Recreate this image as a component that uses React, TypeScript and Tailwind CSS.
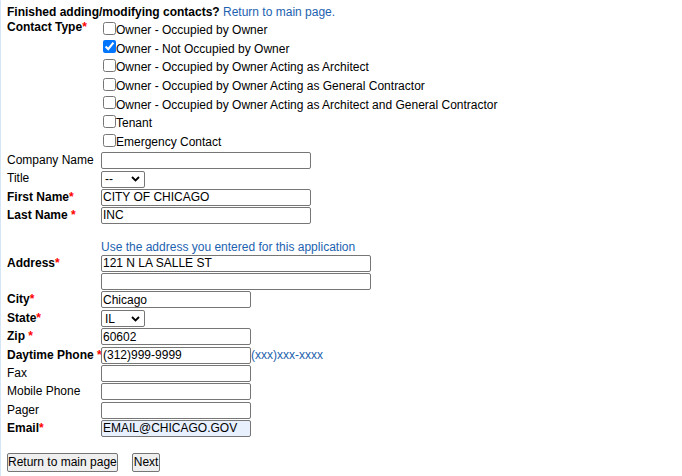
import React from "react";

const contactTypes = [
  { label: "Owner - Occupied by Owner", checked: false },
  { label: "Owner - Not Occupied by Owner", checked: true },
  { label: "Owner - Occupied by Owner Acting as Architect", checked: false },
  { label: "Owner - Occupied by Owner Acting as General Contractor", checked: false },
  {
    label: "Owner - Occupied by Owner Acting as Architect and General Contractor",
    checked: false,
  },
  { label: "Tenant", checked: false },
  { label: "Emergency Contact", checked: false },
];

const Star = ({ space }: { space?: boolean }) => (
  <span className="text-[#ff0000]">{space ? " *" : "*"}</span>
);

const Row = ({
  label,
  bold,
  req,
  reqSpace,
  children,
}: {
  label?: string;
  bold?: boolean;
  req?: boolean;
  reqSpace?: boolean;
  children?: React.ReactNode;
}) => {
  return (
    <div className="flex h-[18.35px]">
      <div
        className={
          bold
            ? "w-[94px] shrink-0 pt-[1px] leading-[14px] font-bold whitespace-nowrap"
            : "w-[94px] shrink-0 pt-[1px] leading-[14px] whitespace-nowrap"
        }
      >
        {label}
        {req && <Star space={reqSpace} />}
      </div>
      <div className="flex items-start">{children}</div>
    </div>
  );
};

const TextBox = ({
  value = "",
  width,
  filled,
}: {
  value?: string;
  width: string;
  filled?: boolean;
}) => {
  return (
    <input
      type="text"
      readOnly
      defaultValue={value}
      className={
        (filled ? "bg-[#e8f0fe] " : "bg-white ") +
        width +
        " h-[17px] border border-[#767676] rounded-[2px] px-[1px] py-0 text-[12px] leading-[14px] text-black outline-none"
      }
    />
  );
};

const SelectBox = ({ value }: { value: string }) => {
  return (
    <div className="relative w-[44px] h-[17px]">
      <select
        defaultValue={value}
        className="appearance-none w-full h-full border border-[#767676] rounded-[2px] bg-white pl-[3px] py-0 text-[12px] leading-[14px] text-black outline-none"
      >
        <option>{value}</option>
      </select>
      <svg
        className="pointer-events-none absolute right-[5px] top-[6px]"
        width="9"
        height="6"
        viewBox="0 0 9 6"
      >
        <polyline
          points="1,1 4.5,4.5 8,1"
          fill="none"
          stroke="#000"
          strokeWidth="1.8"
        />
      </svg>
    </div>
  );
};

export default function App() {
  return (
    <div className="min-h-[476px] w-[682px] bg-white border-l border-[#d4e5f5] pl-[6px] pt-[5px] text-[12px] text-black font-['Liberation_Sans',Arial,sans-serif]">
      <div className="leading-[14px] mb-[1px]">
        <span className="font-bold">Finished adding/modifying contacts?</span>{" "}
        <a className="text-[#1c62b0]">Return to main page.</a>
      </div>

      <div className="flex">
        <div className="w-[94px] shrink-0 leading-[14px] font-bold">
          Contact Type<Star />
        </div>
        <div className="flex flex-col">
          {contactTypes.map((item) => (
            <div key={item.label} className="flex items-start h-[18.7px]">
              <input
                type="checkbox"
                readOnly
                defaultChecked={item.checked}
                className="w-[13px] h-[13px] ml-[2px] mt-[1.5px] shrink-0"
              />
              <span className="leading-[14px] mt-[3px] whitespace-nowrap">
                {item.label}
              </span>
            </div>
          ))}
        </div>
      </div>

      <div className="flex flex-col mt-[1px]">
        <Row label="Company Name">
          <TextBox width="w-[210px]" />
        </Row>
        <Row label="Title">
          <SelectBox value="--" />
        </Row>
        <Row label="First Name" bold req>
          <TextBox width="w-[210px]" value="CITY OF CHICAGO" />
        </Row>
        <Row label="Last Name" bold req reqSpace>
          <TextBox width="w-[210px]" value="INC" />
        </Row>

        <div className="flex mt-[15.3px] h-[14.3px] leading-[14px]">
          <div className="w-[94px] shrink-0" />
          <a className="text-[#1c62b0]">Use the address you entered for this application</a>
        </div>

        <Row label="Address" bold req>
          <TextBox width="w-[270px]" value="121 N LA SALLE ST" />
        </Row>
        <Row>
          <TextBox width="w-[270px]" />
        </Row>
        <Row label="City" bold req>
          <TextBox width="w-[150px]" value="Chicago" />
        </Row>
        <Row label="State" bold req>
          <SelectBox value="IL" />
        </Row>
        <Row label="Zip" bold req reqSpace>
          <TextBox width="w-[150px]" value="60602" />
        </Row>
        <Row label="Daytime Phone" bold req reqSpace>
          <TextBox width="w-[150px]" value="(312)999-9999" />
          <span className="leading-[14px] mt-[1.5px] text-[#1c62b0]">(xxx)xxx-xxxx</span>
        </Row>
        <Row label="Fax">
          <TextBox width="w-[150px]" />
        </Row>
        <Row label="Mobile Phone">
          <TextBox width="w-[150px]" />
        </Row>
        <Row label="Pager">
          <TextBox width="w-[150px]" />
        </Row>
        <Row label="Email" bold req>
          <TextBox width="w-[150px]" value="EMAIL@CHICAGO.GOV" filled />
        </Row>
      </div>

      <div className="flex items-start mt-[15px]">
        <button className="h-[18.5px] border border-[#767676] rounded-[2px] bg-[#efefef] px-0 leading-[14px] text-black">
          Return to main page
        </button>
        <button className="ml-[14px] h-[18.5px] border border-[#767676] rounded-[2px] bg-[#efefef] px-[1px] leading-[14px] text-black">
          Next
        </button>
      </div>
    </div>
  );
}
